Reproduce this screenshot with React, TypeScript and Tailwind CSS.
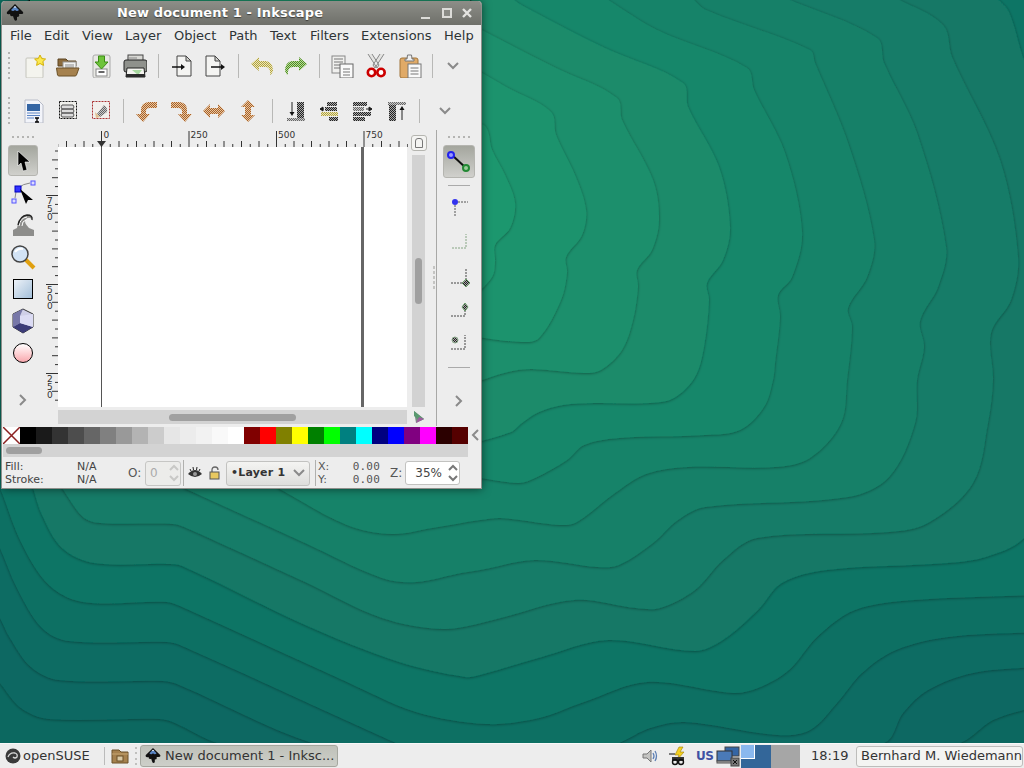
import type { ReactNode } from 'react'

type Pt = [number, number]

// contour lines of the wallpaper, traced from the lightest band out to the darkest
const contours: Pt[][] = [
  [[470, 126], [485, 126], [492, 150], [505, 175], [515, 203], [510, 228], [495, 245], [495, 262], [492, 277], [470, 300]],
  [[470, 66], [508, 88], [551, 112], [556, 135], [575, 175], [586, 210], [582, 235], [566, 257], [567, 273], [561, 300], [539, 338], [522, 342], [470, 336]],
  [[470, 24], [556, 68], [617, 98], [622, 120], [653, 180], [659, 220], [652, 250], [637, 270], [638, 287], [633, 320], [622, 350], [601, 370], [584, 373], [532, 369], [508, 372], [470, 384]],
  [[511, -2], [525, 7], [605, 48], [683, 83], [688, 107], [719, 167], [730, 227], [723, 260], [707, 283], [709, 300], [704, 347], [695, 377], [674, 398], [650, 403], [594, 403], [563, 405], [539, 412], [522, 423], [511, 432], [470, 444]],
  [[605, -2], [657, 30], [747, 68], [754, 90], [785, 153], [802, 232], [792, 277], [778, 295], [780, 317], [775, 363], [773, 380], [764, 407], [740, 430], [705, 435], [619, 438], [584, 445], [567, 460], [535, 478], [518, 483], [470, 476]],
  [[692, -2], [706, 10], [810, 50], [815, 63], [848, 143], [874, 240], [867, 277], [848, 308], [852, 327], [847, 380], [841, 423], [810, 458], [775, 467], [688, 467], [646, 474], [615, 493], [577, 522], [560, 525], [501, 518], [480, 520], [432, 528], [392, 534], [347, 525], [278, 488]],
  [[785, -2], [877, 38], [884, 63], [917, 133], [946, 247], [938, 287], [920, 321], [924, 347], [917, 380], [915, 423], [889, 477], [848, 497], [705, 507], [678, 520], [653, 543], [619, 565], [598, 567], [535, 560], [480, 570], [461, 573], [416, 582], [382, 578], [305, 543], [184, 488]],
  [[896, -2], [943, 25], [952, 57], [1000, 160], [1018, 257], [1011, 300], [991, 333], [993, 380], [988, 423], [973, 483], [928, 523], [889, 532], [757, 538], [723, 560], [695, 590], [660, 608], [636, 608], [574, 600], [493, 620], [444, 629], [382, 618], [305, 582], [184, 527], [173, 524], [100, 523], [83, 517], [62, 488]],
  [[997, -2], [1009, 12], [1024, 60], [1060, 150], [1086, 265], [1060, 400], [1040, 500], [1024, 538], [986, 557], [948, 563], [827, 570], [782, 583], [758, 610], [723, 640], [695, 651], [608, 640], [542, 657], [480, 675], [465, 677], [399, 662], [305, 625], [182, 566], [167, 564], [94, 563], [62, 548], [42, 515], [33, 488]],
  [[1034, 595], [914, 600], [855, 610], [817, 637], [789, 670], [758, 688], [733, 693], [647, 682], [584, 702], [539, 718], [486, 724], [416, 712], [347, 682], [180, 606], [167, 602], [83, 602], [49, 585], [21, 542], [0, 488], [-10, 470]],
  [[1034, 632], [948, 637], [896, 650], [862, 673], [837, 703], [810, 730], [778, 735], [685, 722], [650, 728], [619, 743], [500, 790], [396, 743], [180, 645], [167, 642], [69, 641], [42, 628], [17, 588], [0, 548], [-10, 530]],
  [[1034, 667], [973, 673], [928, 690], [903, 713], [884, 743], [600, 820], [312, 743], [177, 684], [163, 681], [59, 680], [31, 667], [10, 638], [0, 618], [-10, 600]],
  [[1034, 707], [993, 720], [960, 743], [600, 860], [217, 743], [175, 723], [160, 719], [49, 719], [21, 708], [0, 683], [-10, 670]],
]

// tangents scaled by the chord so that close points do not overshoot
const smooth = (p: Pt[]) => {
  const tangent = (a: Pt, b: Pt) => {
    const dx = b[0] - a[0]
    const dy = b[1] - a[1]
    const l = Math.hypot(dx, dy) || 1
    return [dx / l, dy / l]
  }
  let d = `M${p[0][0]} ${p[0][1]}`
  for (let i = 0; i < p.length - 1; i++) {
    const b = p[i]
    const c = p[i + 1]
    const t1 = tangent(p[Math.max(i - 1, 0)], c)
    const t2 = tangent(b, p[Math.min(i + 2, p.length - 1)])
    const k = Math.hypot(c[0] - b[0], c[1] - b[1]) * 0.33
    d += ` C${b[0] + t1[0] * k} ${b[1] + t1[1] * k} ${c[0] - t2[0] * k} ${c[1] - t2[1] * k} ${c[0]} ${c[1]}`
  }
  return d
}

const contourPath = (p: Pt[], i: number) => {
  if (i >= 9) return `${smooth(p)} V-10 H1034 Z`
  return `${smooth(p)} V400 H30 V-10 H${p[0][0]} Z`
}

const bandColor = (i: number) => {
  const t = (i + 1) / 13
  return `rgb(${Math.round(32 - 20 * t)},${Math.round(155 - 51 * t)},${Math.round(111 - 13 * t)})`
}

const Wallpaper = () => (
  <svg className="absolute inset-0 w-full h-full" viewBox="0 0 1024 743" preserveAspectRatio="none">
    <defs>
      <filter id="edge" x="-5%" y="-5%" width="110%" height="110%">
        <feDropShadow dx="0" dy="0.5" stdDeviation="1.6" floodColor="#000" floodOpacity="0.42" />
      </filter>
      <Stipple id="st-orange" color="#a8602a" bg="#e8c8a0" />
      <Stipple id="st-yellow" color="#b0a040" bg="#ece8b8" />
      <Stipple id="st-green" color="#4f8a25" bg="#b8dc98" />
      <Stipple id="st-dark" color="#222" bg="#a8a8a8" />
      <Stipple id="st-grey" color="#666" bg="#c8c8c8" />
      <Stipple id="st-lgreen" color="#6f9a60" bg="#d8e8d0" />
    </defs>
    <rect width="1024" height="743" fill="#0c6860" />
    {contours.map((_, n) => {
      const i = contours.length - 1 - n
      return <path key={i} d={contourPath(contours[i], i)} fill={bandColor(i)} filter="url(#edge)" />
    })}
  </svg>
)

const Stipple = ({ id, color, bg }: { id: string; color: string; bg: string }) => (
  <pattern id={id} width="2" height="2" patternUnits="userSpaceOnUse">
    <rect width="2" height="2" fill={bg} />
    <rect width="1" height="1" fill={color} />
    <rect x="1" y="1" width="1" height="1" fill={color} />
  </pattern>
)

const Ico = ({ children, size = 24 }: { children: ReactNode; size?: number }) => (
  <svg width={size} height={size} viewBox={`0 0 ${size} ${size}`} className="block shrink-0">
    {children}
  </svg>
)

const InkscapeLogo = ({ size = 20 }: { size?: number }) => (
  <svg width={size} height={size} viewBox="0 0 20 20" className="block shrink-0">
    <path d="M10 1 L18 9 Q19 11 16 11 L14 11 Q15 14 12 14 L12 17 Q10 19 9 16 L8 13 Q5 14 5 11 Q1 12 2 9 Z" fill="#111" />
    <path d="M10 3 L14 7 Q12 9 10 7 Q8 9 6 7 Z" fill="#5b86c4" />
    <path d="M10 3 L11.5 4.5 L8.5 4.5 Z" fill="#fff" />
  </svg>
)

const icons: Record<string, ReactNode> = {
  new: (
    <Ico>
      <rect x="4" y="4" width="17" height="20" rx="1" fill="#f4f4ee" stroke="#c4c4bc" />
      <path d="M18 1 L19.8 4.6 L23.6 5 L20.8 7.6 L21.6 11.4 L18 9.5 L14.6 11.4 L15.3 7.6 L12.6 5 L16.3 4.6 Z" fill="#fce94f" stroke="#d4b106" />
    </Ico>
  ),
  open: (
    <Ico>
      <path d="M2 5 H10 L12 7 H20 V12 H2 Z" fill="#8a6a3c" stroke="#5c4422" />
      <rect x="7" y="8" width="13" height="11" fill="#f2f2f0" stroke="#999" />
      <path d="M9 11 H18 M9 13 H18 M9 15 H18" stroke="#888" />
      <path d="M0.5 14 H23 L20.5 21 Q20 22 19 22 H3 Q2 22 1.5 21 Z" fill="#a5814e" stroke="#6b5128" />
    </Ico>
  ),
  save: (
    <Ico>
      <rect x="4" y="1" width="17" height="23" rx="2" fill="#e8e8e4" stroke="#aaa" />
      <rect x="7" y="15" width="11" height="7" fill="#fff" stroke="#888" />
      <rect x="9.5" y="17" width="6" height="2" fill="#666" />
      <path d="M9.5 2 H15.5 V8 H19 L12.5 15 L6 8 H9.5 Z" fill="#6ec43a" stroke="#3c8c14" />
    </Ico>
  ),
  print: (
    <Ico>
      <rect x="5" y="1" width="15" height="6" fill="#d8d8d4" stroke="#444" />
      <rect x="1" y="6" width="23" height="12" rx="2" fill="#8f918c" stroke="#222" />
      <rect x="4" y="3.5" width="10" height="1" fill="#888" />
      <path d="M4 14 H21 L22 23 H3 Z" fill="#f4f4f0" stroke="#222" />
      <path d="M9 16 L15 21 L19 16 Z" fill="#a8d8a0" />
      <rect x="3" y="20" width="19" height="3" fill="#2b2b2b" />
    </Ico>
  ),
  import: (
    <Ico>
      <path d="M7 2 H16 L21 7 V22 H7 Z" fill="#f4f4f2" stroke="#444" />
      <path d="M16 2 V7 H21 Z" fill="#cfcfcb" stroke="#444" />
      <path d="M2 13 H12" stroke="#111" strokeWidth="1.4" />
      <path d="M11 10 L15 13 L11 16 Z" fill="#111" />
    </Ico>
  ),
  export: (
    <Ico>
      <path d="M3 2 H12 L17 7 V22 H3 Z" fill="#f4f4f2" stroke="#444" />
      <path d="M12 2 V7 H17 Z" fill="#cfcfcb" stroke="#444" />
      <path d="M8 13 H19" stroke="#111" strokeWidth="1.4" />
      <path d="M18 10 L22 13 L18 16 Z" fill="#111" />
    </Ico>
  ),
  undo: (
    <Ico>
      <path d="M1 10 L9 3 V7 H16 Q23 8 23 17 Q22 20 20 21 Q21 13 15 13 H9 V17 Z" fill="url(#st-yellow)" />
    </Ico>
  ),
  redo: (
    <Ico>
      <path d="M23 10 L15 3 V7 H8 Q1 8 1 17 Q2 20 4 21 Q3 13 9 13 H15 V17 Z" fill="url(#st-green)" />
    </Ico>
  ),
  copy: (
    <Ico>
      <rect x="2" y="2" width="13" height="17" fill="#f0f0ee" stroke="#888" />
      <path d="M4 5 H13 M4 8 H13 M4 11 H12 M4 14 H10" stroke="#777" />
      <rect x="10" y="10" width="13" height="14" fill="#fafafa" stroke="#666" />
      <path d="M13 15 H20 M13 18 H20 M13 21 H20" stroke="#777" />
    </Ico>
  ),
  cut: (
    <Ico>
      <path d="M4 0 L13 14 L15 11 L8 0 M20 0 L11 14 L9 11 L16 0" fill="#e4e4e2" stroke="#888" />
      <circle cx="7.5" cy="18.5" r="3.7" fill="#fff" stroke="#cc0000" strokeWidth="2.6" />
      <circle cx="17" cy="18.5" r="3.7" fill="#fff" stroke="#cc0000" strokeWidth="2.6" />
    </Ico>
  ),
  paste: (
    <Ico>
      <rect x="2" y="4" width="18" height="20" rx="2" fill="#e0aa67" stroke="#a0743a" />
      <path d="M7 5 H9 L9.5 1 H13.5 L14 5 H16 V7 H7 Z" fill="#eee" stroke="#777" />
      <rect x="10" y="10" width="13" height="14" fill="#fafafa" stroke="#777" />
      <path d="M12.5 14 H20.5 M12.5 17 H20.5 M12.5 20 H20.5" stroke="#777" />
    </Ico>
  ),
  docprops: (
    <Ico>
      <path d="M3 1 H16 L21 6 V24 H3 Z" fill="#f2f4fa" stroke="#b8bcc8" />
      <rect x="5" y="5" width="13" height="7" fill="#3465a4" />
      <path d="M5 14 H18 M5 16.5 H18 M5 19 H12" stroke="#5c85c4" />
      <path d="M13 19 H17 M15 19 V23 M13 23 H17" stroke="#000" strokeWidth="1.3" />
    </Ico>
  ),
  selectall: (
    <Ico>
      <rect x="3.5" y="2.5" width="17" height="17" fill="#f0f0ec" stroke="#111" strokeDasharray="2 1" />
      <path d="M6 6 H17 L18 8 L17 10 H6 L5 8 Z M6 10 H17 L18 12 L17 14 H6 L5 12 Z M6 14 H17 L18 16 L17 18 H6 L5 16 Z" fill="#ddd" stroke="#555" />
    </Ico>
  ),
  selectdraw: (
    <Ico>
      <rect x="3.5" y="2.5" width="17" height="17" fill="#f2f0ec" stroke="#a33" strokeDasharray="2 1" />
      <path d="M8 15 L15 6 Q19 9 18 13 L11 18 Z" fill="url(#st-grey)" />
      <path d="M6 13 L11 18 L7 19 Z" fill="#e0c090" />
    </Ico>
  ),
  raise: (
    <Ico>
      <path d="M22 3 H13 Q6 4 6 11 V15 H1 L8 23 L15 15 H11 V12 Q11 9 15 9 H22 Z" fill="url(#st-orange)" />
    </Ico>
  ),
  lower: (
    <Ico>
      <path d="M2 3 H11 Q18 4 18 11 V15 H23 L16 23 L9 15 H13 V12 Q13 9 9 9 H2 Z" fill="url(#st-orange)" />
    </Ico>
  ),
  fliph: (
    <Ico>
      <path d="M1 12 L8 5 V9 H16 V5 L23 12 L16 19 V15 H8 V19 Z" fill="url(#st-orange)" />
    </Ico>
  ),
  flipv: (
    <Ico>
      <path d="M12 1 L19 8 H15 V16 H19 L12 23 L5 16 H9 V8 H5 Z" fill="url(#st-orange)" />
    </Ico>
  ),
  alignb: (
    <Ico>
      <rect x="13" y="3" width="7" height="16" fill="url(#st-dark)" />
      <rect x="3" y="19" width="18" height="3" fill="url(#st-grey)" />
      <path d="M8 3 V14" stroke="#222" />
      <path d="M5.5 13 H10.5 L8 17 Z" fill="#111" />
    </Ico>
  ),
  alignl: (
    <Ico>
      <rect x="10" y="3" width="10" height="4" fill="url(#st-dark)" />
      <rect x="8" y="8" width="12" height="4" fill="url(#st-dark)" />
      <rect x="4" y="13" width="17" height="4" fill="url(#st-yellow)" />
      <rect x="12" y="18" width="9" height="4" fill="url(#st-dark)" />
      <path d="M7 10 H3 M3 10 L6 8 V12 Z" stroke="#222" />
    </Ico>
  ),
  alignr: (
    <Ico>
      <rect x="2" y="3" width="14" height="4" fill="url(#st-dark)" />
      <rect x="2" y="8" width="11" height="4" fill="url(#st-grey)" />
      <rect x="2" y="13" width="18" height="4" fill="url(#st-dark)" />
      <rect x="2" y="18" width="12" height="4" fill="url(#st-dark)" />
      <path d="M15 10 L21 10 M21 10 L18 8 V12 Z" stroke="#222" />
    </Ico>
  ),
  alignt: (
    <Ico>
      <rect x="3" y="3" width="18" height="3" fill="url(#st-grey)" />
      <rect x="4" y="6" width="7" height="16" fill="url(#st-dark)" />
      <path d="M17 9 V21" stroke="#222" />
      <path d="M14.5 11 H19.5 L17 7 Z" fill="#111" />
    </Ico>
  ),
}

const Chevron = ({ dir, className = '' }: { dir: 'down' | 'right' | 'left'; className?: string }) => {
  const d = dir === 'down' ? 'M2 4 L7 9 L12 4' : dir === 'right' ? 'M4 2 L9 7 L4 12' : 'M10 2 L5 7 L10 12'
  return (
    <svg width="14" height="14" viewBox="0 0 14 14" className={`block shrink-0 ${className}`}>
      <path d={d} fill="none" stroke="#8a8a8a" strokeWidth="2" />
    </svg>
  )
}

const Sep = ({ className = '' }: { className?: string }) => <div className={`w-px h-[24px] bg-[#b8b8b6] shrink-0 ${className}`} />

const VGrip = ({ className = '' }: { className?: string }) => (
  <div className={`flex flex-col gap-[3px] shrink-0 ${className}`}>
    {[0, 1, 2, 3, 4, 5].map((d) => (
      <div key={d} className="w-[2px] h-[2px] bg-[#b4b4b2]" />
    ))}
  </div>
)

const HGrip = () => (
  <div className="flex gap-[3px] justify-center h-[2px]">
    {[0, 1, 2, 3, 4].map((d) => (
      <div key={d} className="w-[2px] h-[2px] bg-[#b4b4b2]" />
    ))}
  </div>
)

const ToolBtn = ({ name }: { name: string }) => <div className="w-[33.7px] flex justify-center shrink-0">{icons[name]}</div>

const topRuler = () => {
  const ticks = []
  for (let i = -5; i < 36; i++) {
    const x = 43.5 + i * 8.75
    const major = i % 10 === 0
    ticks.push(<path key={i} d={`M${x} 17 V${major ? 1 : i % 2 === 0 ? 11 : 14}`} stroke="#333" />)
  }
  return ticks
}

const sideRuler = () => {
  const ticks = []
  for (let i = -6; i < 30; i++) {
    const y = 48.5 + i * 8.9
    const major = i % 10 === 0
    ticks.push(<path key={i} d={`M12 ${y} H${major ? 0 : i % 2 === 0 ? 6 : 9}`} stroke="#333" />)
  }
  return ticks
}

const swatches = [
  '#000000', '#1a1a1a', '#333333', '#4d4d4d', '#666666', '#808080', '#999999', '#b3b3b3', '#cccccc', '#e6e6e6', '#ececec', '#f2f2f2', '#f9f9f9', '#ffffff',
  '#800000', '#ff0000', '#808000', '#ffff00', '#008000', '#00ff00', '#008080', '#00ffff', '#000080', '#0000ff', '#800080', '#ff00ff', '#2b0000', '#550000',
]

const SpinArrows = ({ color }: { color: string }) => (
  <svg width="12" height="22" viewBox="0 0 12 22" className="block shrink-0">
    <path d="M2 8 L6 4 L10 8 M2 14 L6 18 L10 14" fill="none" stroke={color} strokeWidth="2" />
  </svg>
)

const menus = [
  ['File', 'w-[34px]'],
  ['Edit', 'w-[38px]'],
  ['View', 'w-[43px]'],
  ['Layer', 'w-[49px]'],
  ['Object', 'w-[55px]'],
  ['Path', 'w-[41px]'],
  ['Text', 'w-[40px]'],
  ['Filters', 'w-[51px]'],
  ['Extensions', 'w-[83px]'],
  ['Help', 'w-[34px]'],
]

const InkscapeWindow = () => (
  <div className="absolute left-[1px] top-[1px] w-[481px] h-[488px] bg-[#ededed] border border-[#8f8f8b] border-t-0 rounded-t-[4px] flex flex-col overflow-hidden shadow-[0_0_10px_rgba(0,0,0,0.55)]">
    <div className="h-[24px] shrink-0 flex items-center bg-gradient-to-b from-[#8d8e88] to-[#6f706a] pl-[3px] pr-[8px] relative">
      <InkscapeLogo />
      <div className="absolute left-[115px] top-[4px] text-[13px] leading-[16px] font-bold text-white tracking-[0.15px] [text-shadow:0_1px_1px_rgba(0,0,0,0.5)] whitespace-nowrap">
        New document 1 - Inkscape
      </div>
      <div className="ml-auto flex items-center gap-[9px]">
        <div className="w-[12px] h-[12px] flex items-end"><div className="w-[9px] h-[2px] bg-[#dcdcd8]" /></div>
        <div className="w-[10px] h-[10px] border-2 border-[#dcdcd8] bg-[#8a8b85]" />
        <svg width="12" height="12" viewBox="0 0 12 12"><path d="M2 2 L10 10 M10 2 L2 10" stroke="#e4e4e0" strokeWidth="2.4" /></svg>
      </div>
    </div>

    <div className="h-[22px] shrink-0 flex items-center pl-[8px] text-[13px] text-[#2e3436]">
      {menus.map(([m, w]) => (
        <div key={m} className={`${w} shrink-0`}>{m}</div>
      ))}
    </div>

    <div className="h-[37px] shrink-0 flex items-center pl-[6px]">
      <VGrip className="mr-[7px]" />
      <ToolBtn name="new" />
      <ToolBtn name="open" />
      <ToolBtn name="save" />
      <ToolBtn name="print" />
      <Sep className="ml-[6px] mr-[6px]" />
      <ToolBtn name="import" />
      <ToolBtn name="export" />
      <Sep className="ml-[6px] mr-[6px]" />
      <ToolBtn name="undo" />
      <ToolBtn name="redo" />
      <Sep className="ml-[6px] mr-[6px]" />
      <ToolBtn name="copy" />
      <ToolBtn name="cut" />
      <ToolBtn name="paste" />
      <Sep className="ml-[5px] mr-[13px]" />
      <Chevron dir="down" />
    </div>

    <div className="h-[9px] shrink-0" />

    <div className="h-[35px] shrink-0 flex items-center pl-[6px]">
      <VGrip className="mr-[7px]" />
      <ToolBtn name="docprops" />
      <ToolBtn name="selectall" />
      <ToolBtn name="selectdraw" />
      <Sep className="ml-[5px] mr-[6px]" />
      <ToolBtn name="raise" />
      <ToolBtn name="lower" />
      <ToolBtn name="fliph" />
      <ToolBtn name="flipv" />
      <Sep className="ml-[7px] mr-[6px]" />
      <ToolBtn name="alignb" />
      <ToolBtn name="alignl" />
      <ToolBtn name="alignr" />
      <ToolBtn name="alignt" />
      <Sep className="ml-[5px] mr-[18px]" />
      <Chevron dir="down" />
    </div>

    <div className="h-[2px] shrink-0" />

    <div className="flex h-[296px] shrink-0">
      <div className="w-[44px] shrink-0 flex flex-col items-center pt-[6px] pr-[3px]">
        <HGrip />
        <div className="mt-[7px] w-[30px] h-[31px] rounded-[3px] border border-[#b5b5b0] bg-gradient-to-b from-[#a4a69e] to-[#d0d0cc] flex items-center justify-center">
          <svg width="18" height="22" viewBox="0 0 18 22"><path d="M4 1 L16 12 L11 12 L13 20 L9 21 L7 13 L4 16 Z" fill="#000" stroke="#fff" strokeWidth="0.6" /></svg>
        </div>
        <div className="mt-[1px] flex flex-col items-center">
          <div className="h-[32px] flex items-center">
            <svg width="26" height="26" viewBox="0 0 26 26">
              <path d="M5 18 Q5 5 20 3" fill="none" stroke="#888" />
              <rect x="5" y="6" width="6" height="6" fill="#3333ff" stroke="#0000c0" />
              <rect x="21" y="1" width="4" height="4" fill="#ddf" stroke="#5555ff" />
              <rect x="2" y="19" width="4" height="4" fill="#ddf" stroke="#5555ff" />
              <path d="M10 9 L23 20 L18 20 L16 24 Z M10 9 L16 24" fill="#000" />
            </svg>
          </div>
          <div className="h-[31px] flex items-center">
            <svg width="24" height="24" viewBox="0 0 24 24">
              <path d="M2 17 L6 15 Q8 3 16 2 Q22 2 21 7 Q19 3 15 6 Q12 9 18 15 L23 17 V23 H2 Z" fill="#8d8d8b" />
              <path d="M8 13 Q9 5 16 4 M11 13 Q11 8 15 7" fill="none" stroke="#fff" />
              <path d="M7 12 Q9 3 16 2 Q22 2 21 7" fill="none" stroke="#222" strokeWidth="1.3" />
            </svg>
          </div>
          <div className="h-[33px] flex items-center">
            <svg width="26" height="26" viewBox="0 0 26 26">
              <path d="M15 15 L24 24" stroke="#e0a010" strokeWidth="4" />
              <circle cx="10" cy="10" r="8" fill="#d2e3f5" stroke="#444" strokeWidth="1.5" />
              <path d="M5 8 Q8 4 13 5" stroke="#fff" strokeWidth="2" fill="none" />
            </svg>
          </div>
          <div className="h-[32px] flex items-center">
            <div className="w-[20px] h-[20px] border border-black bg-gradient-to-br from-[#edf2f8] to-[#a3bfd9]" />
          </div>
          <div className="h-[32px] flex items-center">
            <svg width="24" height="26" viewBox="0 0 24 26">
              <path d="M12 1 L22 6 V19 L12 25 L2 19 V6 Z" fill="#cfcfe8" stroke="#333" />
              <path d="M12 1 L2 6 V19 L9 15 V8 Z" fill="#7878a8" />
              <path d="M2 19 L12 25 L22 19 L9 15 Z" fill="#3c3c78" />
              <path d="M9 8 L22 6 L22 19 L9 15 Z" fill="#dcdcf4" />
            </svg>
          </div>
          <div className="h-[32px] flex items-center">
            <div className="w-[20px] h-[20px] rounded-full border border-black bg-gradient-to-b from-[#fff] to-[#f7a8ae]" />
          </div>
        </div>
        <Chevron dir="right" className="mt-[24px]" />
      </div>

      <div className="w-[390px] shrink-0 flex flex-col relative">
        <div className="flex h-[17px] shrink-0">
          <div className="w-[12px] shrink-0" />
          <svg width="350" height="17" viewBox="0 0 350 17" className="block shrink-0 text-[9px]">
            {topRuler()}
            <text x="45.5" y="8" fontSize="9" fill="#333" fontFamily="DejaVu Sans">0</text>
            <text x="132.5" y="8" fontSize="9" fill="#333" fontFamily="DejaVu Sans">250</text>
            <text x="220" y="8" fontSize="9" fill="#333" fontFamily="DejaVu Sans">500</text>
            <text x="307.5" y="8" fontSize="9" fill="#333" fontFamily="DejaVu Sans">750</text>
            <path d="M39 11 H48 L43.5 17 Z" fill="#333" />
          </svg>
          <div className="ml-[3px] mt-[5px] w-[16px] h-[16px] rounded-[3px] border border-[#b5b5b0] bg-[#f4f4f2] flex items-center justify-center">
            <div className="w-[8px] h-[10px] border border-[#777] rounded-t-[3px]" />
          </div>
        </div>
        <div className="flex h-[260px] shrink-0">
          <svg width="12" height="260" viewBox="0 0 12 260" className="block shrink-0">
            {sideRuler()}
            {[['7', '5', '0', 48], ['5', '0', '0', 137], ['2', '5', '0', 226]].map(([a, b, c, y]) => (
              <g key={String(y)} fontSize="9" fill="#333" fontFamily="DejaVu Sans">
                <text x="1" y={Number(y) + 9}>{a}</text>
                <text x="1" y={Number(y) + 17}>{b}</text>
                <text x="1" y={Number(y) + 25}>{c}</text>
              </g>
            ))}
          </svg>
          <div className="w-[349px] h-[260px] shrink-0 bg-white relative overflow-hidden">
            <div className="absolute left-[43px] top-0 bottom-0 w-px bg-[#555]" />
            <div className="absolute left-[303px] top-0 bottom-0 w-[3px] bg-[#666]" />
          </div>
          <div className="ml-[5px] w-[13px] shrink-0 flex flex-col">
            <div className="h-[8px] shrink-0" />
            <div className="flex-1 bg-[#d2d2d2] pt-[103px] flex justify-center">
              <div className="w-[7px] h-[46px] rounded-[4px] bg-[#a0a0a0]" />
            </div>
          </div>
        </div>
        <div className="flex h-[14px] mt-[3px] shrink-0">
          <div className="w-[12px] shrink-0" />
          <div className="w-[349px] bg-[#d3d3d3] flex items-center pl-[111px] shrink-0">
            <div className="w-[127px] h-[7px] rounded-[4px] bg-[#a0a0a0]" />
          </div>
          <svg width="13" height="14" viewBox="0 0 13 14" className="ml-[5px] block shrink-0">
            <path d="M2 1 L12 9 L4 13 Z" fill="#7f8a86" />
            <path d="M2 1 L12 9 L8 11 L2 6 Z" fill="#5a9a70" />
            <path d="M4 13 L12 9 L7 7 Z" fill="#a05aa0" />
          </svg>
        </div>
        <div className="absolute right-[1px] top-[136px] flex flex-col gap-[2px]">
          {[0, 1, 2, 3, 4].map((d) => (
            <div key={d} className="w-[2px] h-[3px] bg-[#c4c4c2]" />
          ))}
        </div>
      </div>

      <div className="flex-1 border-l border-[#a8a8a6] flex flex-col items-center pt-[6px]">
        <HGrip />
        <div className="mt-[7px] w-[32px] h-[33px] rounded-[3px] border border-[#b5b5b0] bg-gradient-to-b from-[#a4a69e] to-[#d0d0cc] flex items-center justify-center">
          <svg width="26" height="24" viewBox="0 0 26 24">
            <path d="M6 5 L20 18" stroke="#111" strokeWidth="2" />
            <circle cx="5" cy="5" r="3" fill="#99f" stroke="#2222ee" strokeWidth="2" />
            <circle cx="20" cy="18" r="3" fill="#9c9" stroke="#228833" strokeWidth="2" />
          </svg>
        </div>
        <div className="mt-[7px] w-[22px] h-px bg-[#aaa]" />
        <div className="mt-[5px] flex flex-col items-center">
          <div className="h-[34px] flex items-center">
            <svg width="24" height="24" viewBox="0 0 24 24">
              <path d="M8 6 H21 M8 6 V20" stroke="#555" strokeDasharray="2 1" fill="none" />
              <circle cx="8" cy="6" r="3" fill="#3333ee" />
            </svg>
          </div>
          <div className="h-[35px] flex items-center">
            <svg width="24" height="24" viewBox="0 0 24 24">
              <path d="M5 17 H19 V3" stroke="#86a584" strokeDasharray="2 1" fill="none" />
            </svg>
          </div>
          <div className="h-[34px] flex items-center">
            <svg width="24" height="24" viewBox="0 0 24 24">
              <path d="M4 18 H19 V3" stroke="#444" strokeDasharray="2 1" fill="none" />
              <path d="M19 14 L23 18 L19 22 L15 18 Z" fill="url(#st-dark)" stroke="#6a9a6a" />
            </svg>
          </div>
          <div className="h-[33px] flex items-center">
            <svg width="24" height="24" viewBox="0 0 24 24">
              <path d="M4 17 H18 V4" stroke="#444" strokeDasharray="2 1" fill="none" />
              <path d="M18 4 L21 8 L18 12 L15 8 Z" fill="url(#st-dark)" stroke="#6a9a6a" />
            </svg>
          </div>
          <div className="h-[33px] flex items-center">
            <svg width="24" height="24" viewBox="0 0 24 24">
              <path d="M4 17 H18 V3" stroke="#444" strokeDasharray="2 1" fill="none" />
              <circle cx="8" cy="8" r="3" fill="url(#st-dark)" stroke="#8aa88a" />
            </svg>
          </div>
        </div>
        <div className="mt-[7px] w-[22px] h-px bg-[#aaa]" />
        <Chevron dir="right" className="mt-[26px]" />
      </div>
    </div>

    <div className="h-[18px] shrink-0 flex items-center pl-[1px]">
      <svg width="17" height="17" viewBox="0 0 17 17" className="block shrink-0">
        <rect width="17" height="17" fill="#fff" />
        <path d="M0 0 L17 17 M17 0 L0 17" stroke="#8b2020" strokeWidth="1.5" />
      </svg>
      <div className="flex h-[17px] w-[448px] shrink-0">
        {swatches.map((c, i) => (
          <div key={i} className="w-[16px] shrink-0" style={{ backgroundColor: c }} />
        ))}
      </div>
      <Chevron dir="left" />
    </div>

    <div className="h-[14px] shrink-0 pl-[1px] flex">
      <div className="w-[465px] h-[13px] bg-[#d3d3d3] flex items-center pl-[3px]">
        <div className="w-[36px] h-[7px] rounded-[4px] bg-[#a0a0a0]" />
      </div>
    </div>

    <div className="flex-1 flex items-center text-[11px] text-[#444] relative">
      <div className="w-[75px] pl-[3px] leading-[13px] shrink-0">
        <div>Fill:</div>
        <div>Stroke:</div>
      </div>
      <div className="w-[51px] leading-[13px] shrink-0">
        <div>N/A</div>
        <div>N/A</div>
      </div>
      <div className="w-[17px] text-[12px] text-[#555] shrink-0">O:</div>
      <div className="w-[36px] h-[25px] rounded-[3px] border border-[#c6c6c4] bg-[#ececea] flex items-center pl-[4px] text-[12px] text-[#aaa] shrink-0">
        <span className="flex-1">0</span>
        <SpinArrows color="#c8c8c6" />
      </div>
      <div className="ml-[2px] w-px h-[26px] bg-[#b0b0ae] shrink-0" />
      <div className="w-[22px] flex justify-center shrink-0">
        <svg width="16" height="14" viewBox="0 0 16 14">
          <path d="M1 8 Q8 0 15 8 Q8 14 1 8 Z" fill="#333" />
          <path d="M3 3 L4 5 M6 1 L6.5 4 M10 1 L9.5 4 M13 3 L12 5" stroke="#222" />
          <circle cx="8" cy="8" r="2" fill="#999" />
        </svg>
      </div>
      <div className="w-[18px] flex justify-center shrink-0">
        <svg width="12" height="14" viewBox="0 0 12 14">
          <path d="M3 6 V4 Q3 1 6 1 Q9 1 9 4" fill="none" stroke="#666" strokeWidth="1.3" />
          <rect x="1" y="6" width="9" height="7" fill="#e8c860" stroke="#555" />
        </svg>
      </div>
      <div className="ml-[2px] w-[84px] h-[25px] rounded-[3px] border border-[#c2c2c0] bg-gradient-to-b from-[#f4f4f2] to-[#dededc] flex items-center pl-[4px] font-bold text-[#333] tracking-[0.2px] shrink-0">
        <span className="flex-1 whitespace-nowrap">•Layer 1</span>
        <Chevron dir="down" className="mr-[3px]" />
      </div>
      <div className="ml-[5px] w-px h-[26px] bg-[#b0b0ae] shrink-0" />
      <div className="ml-[2px] w-[20px] leading-[13px] shrink-0 text-[#555]">
        <div>X:</div>
        <div>Y:</div>
      </div>
      <div className="w-[43px] pr-[1px] leading-[13px] text-right font-['DejaVu_Sans_Mono',monospace] text-[#555] shrink-0 tracking-[0.2px]">
        <div>0.00</div>
        <div>0.00</div>
      </div>
      <div className="ml-[9px] w-[15px] text-[12px] text-[#555] shrink-0">Z:</div>
      <div className="w-[55px] h-[24px] rounded-[3px] border border-[#c2c2c0] bg-white flex items-center text-[12px] text-[#444] shrink-0">
        <span className="flex-1 text-right pr-[5px]">35%</span>
        <SpinArrows color="#777" />
      </div>
    </div>
  </div>
)

const Taskbar = () => (
  <div className="h-[25px] shrink-0 bg-[#ededed] border-t border-[#f8f8f8] flex items-center text-[13px] text-[#333] relative z-10">
    <svg width="16" height="16" viewBox="0 0 16 16" className="ml-[5px] block shrink-0">
      <circle cx="8" cy="8" r="7.5" fill="#3a3a3a" />
      <path d="M3 9 Q5 4 10 5 Q13 6 12 9 Q10 11 8 9" fill="none" stroke="#d8d8d8" strokeWidth="1.3" />
    </svg>
    <span className="ml-[2px] w-[81px] shrink-0">openSUSE</span>
    <div className="w-px h-[18px] bg-[#bbb] shrink-0" />
    <svg width="18" height="18" viewBox="0 0 18 18" className="ml-[6px] block shrink-0">
      <path d="M1 3 H8 L10 5 H17 V16 H1 Z" fill="#a5814e" stroke="#6b5128" />
      <path d="M1 7 H17" stroke="#c4a470" />
      <rect x="6" y="9" width="6" height="5" fill="#d9c8a4" stroke="#6b5128" />
    </svg>
    <div className="ml-[6px] h-[18px] flex flex-col justify-between shrink-0">
      {[0, 1, 2, 3].map((d) => (
        <div key={d} className="w-[2px] h-[2px] bg-[#c0c0be]" />
      ))}
    </div>
    <div className="ml-[3px] w-[198px] h-[22px] rounded-[3px] border border-[#a5a79f] bg-gradient-to-b from-[#bfc1b9] to-[#cdcfc9] flex items-center pl-[3px] shrink-0 text-[#333]">
      <InkscapeLogo size={18} />
      <span className="ml-[3px] whitespace-nowrap">New document 1 - Inksc...</span>
    </div>
    <svg width="18" height="18" viewBox="0 0 18 18" className="ml-[304px] block shrink-0">
      <path d="M1 7 H5 L9 3 V15 L5 11 H1 Z" fill="#c4c4c2" stroke="#777" />
      <path d="M11 6 Q13 9 11 12 M13 4 Q16 9 13 14" fill="none" stroke="#5c7fb4" strokeWidth="1.3" />
    </svg>
    <svg width="20" height="20" viewBox="0 0 20 20" className="ml-[8px] block shrink-0">
      <path d="M1 8 H7" stroke="#555" strokeWidth="1.5" />
      <path d="M11 1 L7 9 H11 L9 14 L16 6 H12 L15 1 Z" fill="#f5d020" stroke="#a08000" strokeWidth="0.6" />
      <rect x="4" y="11" width="12" height="4" fill="#333" />
      <circle cx="7" cy="16" r="2.5" fill="none" stroke="#111" strokeWidth="1.4" />
      <circle cx="13" cy="16" r="2.5" fill="none" stroke="#111" strokeWidth="1.4" />
    </svg>
    <span className="ml-[8px] w-[17px] text-[12px] font-bold text-[#3f51a3] tracking-[-0.5px] shrink-0">US</span>
    <svg width="24" height="22" viewBox="0 0 24 22" className="ml-[3px] block shrink-0">
      <rect x="9" y="2" width="14" height="9" fill="#3465a4" stroke="#444" />
      <rect x="1" y="6" width="15" height="10" fill="#4a7ab8" stroke="#333" />
      <rect x="1" y="16" width="15" height="2" fill="#aaa" stroke="#555" />
      <rect x="15" y="13" width="8" height="8" fill="#777" stroke="#444" />
      <path d="M17 15 L21 19 M21 15 L17 19" stroke="#111" />
    </svg>
    <div className="ml-[1px] w-[30px] h-[23px] bg-[#336699] shrink-0">
      <div className="w-[14px] h-[14px] bg-[#8ab8ee] border-r border-b border-white" />
    </div>
    <div className="w-[29px] h-[23px] bg-[#a6a6a6] shrink-0" />
    <span className="ml-[11px] w-[45px] shrink-0">18:19</span>
    <div className="w-[167px] h-[21px] rounded-[3px] border border-[#bdbdbb] bg-[#f4f4f2] flex items-center pl-[4px] whitespace-nowrap shrink-0">
      Bernhard M. Wiedemann
    </div>
  </div>
)

export default function App() {
  return (
    <div className="w-[1024px] h-[768px] overflow-hidden flex flex-col font-['DejaVu_Sans',sans-serif]">
      <div className="flex-1 relative overflow-hidden">
        <Wallpaper />
        <InkscapeWindow />
      </div>
      <Taskbar />
    </div>
  )
}
